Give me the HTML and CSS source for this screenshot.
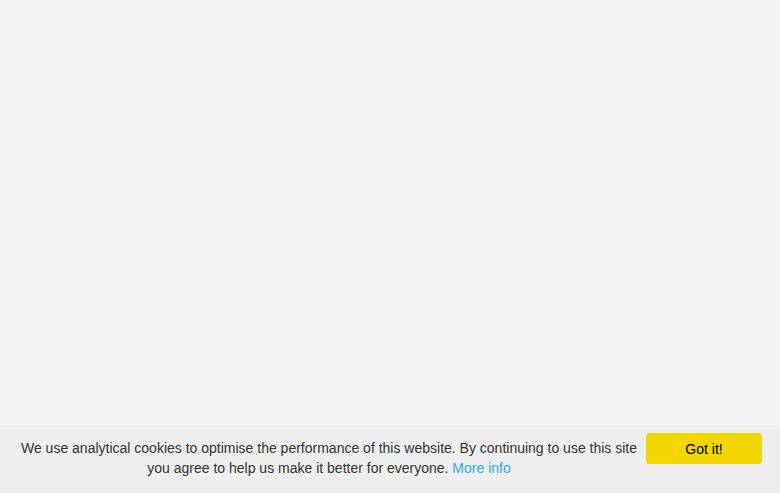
FILE: index.html
```html
<!DOCTYPE html>
<html lang="en">
<head>
<meta charset="utf-8">
<title>Cookies</title>
<link rel="stylesheet" href="styles.css">
</head>
<body>
<main class="page"></main>
<div class="cookie-bar">
  <p class="cookie-message">We use analytical cookies to optimise the performance of this website. By continuing to use this site you agree to help us make it better for everyone. <a class="cookie-link" href="#">More info</a></p>
  <button class="cookie-btn" type="button">Got it!</button>
</div>
</body>
</html>
```

FILE: styles.css
```css
html, body {
  margin: 0;
  padding: 0;
  height: 100%;
}
body {
  background: #f4f4f4;
  font-family: "Liberation Sans", Arial, sans-serif;
  display: flex;
  flex-direction: column;
}
.page {
  flex: 1;
}
.cookie-bar {
  height: 68px;
  box-sizing: border-box;
  background: #eeeeee;
  display: flex;
  align-items: flex-start;
  padding: 8px 18px 0 18px;
  gap: 6px;
}
.cookie-message {
  flex: 1;
  margin: 0;
  padding-top: 5px;
  text-align: center;
  font-size: 14px;
  line-height: 20px;
  color: #333333;
}
.cookie-link {
  color: #31a8f0;
  text-decoration: none;
}
.cookie-btn {
  width: 116px;
  height: 31px;
  border: none;
  border-radius: 4px;
  background: #f1d600;
  color: #000;
  font-family: "Liberation Sans", Arial, sans-serif;
  font-size: 14px;
  padding: 0;
  cursor: pointer;
}
```
